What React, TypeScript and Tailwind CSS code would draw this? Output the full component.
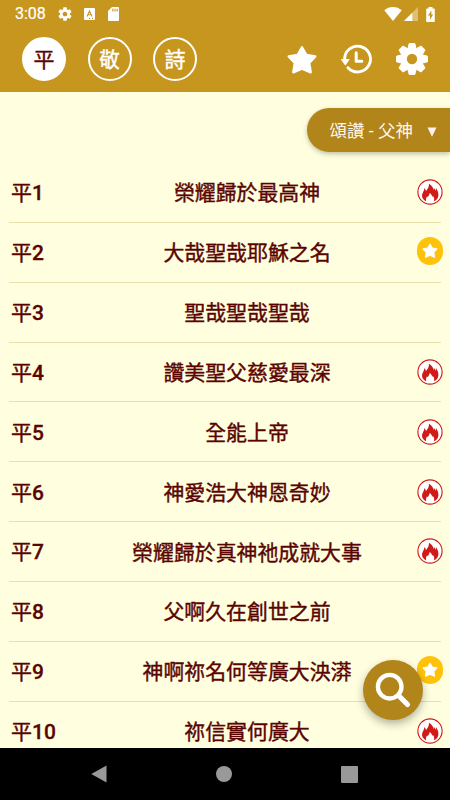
import type { ReactNode } from 'react';

type Mark = 'fire' | 'star';

const tabs = ['平', '敬', '詩'];

const hymns: { no: number; title: string; mark?: Mark }[] = [
  { no: 1, title: '榮耀歸於最高神', mark: 'fire' },
  { no: 2, title: '大哉聖哉耶穌之名', mark: 'star' },
  { no: 3, title: '聖哉聖哉聖哉' },
  { no: 4, title: '讚美聖父慈愛最深', mark: 'fire' },
  { no: 5, title: '全能上帝', mark: 'fire' },
  { no: 6, title: '神愛浩大神恩奇妙', mark: 'fire' },
  { no: 7, title: '榮耀歸於真神祂成就大事', mark: 'fire' },
  { no: 8, title: '父啊久在創世之前' },
  { no: 9, title: '神啊祢名何等廣大泱漭', mark: 'star' },
  { no: 10, title: '祢信實何廣大', mark: 'fire' },
];

const GEAR =
  'M19.43 12.98c.04-.32.07-.64.07-.98s-.03-.66-.07-.98l2.11-1.65c.19-.15.24-.42.12-.64l-2-3.46c-.12-.22-.39-.3-.61-.22l-2.49 1c-.52-.4-1.08-.73-1.69-.98l-.38-2.65A.488.488 0 0 0 14 2h-4c-.25 0-.46.18-.49.42l-.38 2.65c-.61.25-1.17.59-1.69.98l-2.49-1c-.23-.09-.49 0-.61.22l-2 3.46c-.13.22-.07.49.12.64l2.11 1.65c-.04.32-.07.65-.07.98s.03.66.07.98l-2.11 1.65c-.19.15-.24.42-.12.64l2 3.46c.12.22.39.3.61.22l2.49-1c.52.4 1.08.73 1.69.98l.38 2.65c.03.24.24.42.49.42h4c.25 0 .46-.18.49-.42l.38-2.65c.61-.25 1.17-.59 1.69-.98l2.49 1c.23.09.49 0 .61-.22l2-3.46c.12-.22.07-.49-.12-.64l-2.11-1.65zM12 15.5c-1.93 0-3.5-1.57-3.5-3.5s1.57-3.5 3.5-3.5 3.5 1.57 3.5 3.5-1.57 3.5-3.5 3.5z';

function Star({ className }: { className: string }) {
  return (
    <svg viewBox="0 0 30 29" className={className} fill="currentColor" stroke="currentColor" strokeWidth="2.4" strokeLinejoin="round">
      <path d="M15 2.3l4.3 7.6 9 1.6-6.1 6.5 1.5 9.3-8.7-3.7-8.7 3.7 1.5-9.3-6.1-6.5 9-1.6z" />
    </svg>
  );
}

function StatusBar() {
  return (
    <div className="flex h-7 items-center justify-between pl-[15px] pr-[15px]">
      <div className="flex items-center">
        <span className="w-[44px] text-[16px] leading-none [-webkit-text-stroke:0.2px]">3:08</span>
        <svg viewBox="0 0 24 24" className="-ml-[2px] h-4 w-4" fill="currentColor"><path d={GEAR} /></svg>
        <svg viewBox="0 0 11 12" className="ml-[11px] h-3 w-[11px]">
          <rect width="11" height="12" rx="1" fill="currentColor" />
          <path d="M3 8.5L5.5 3 8 8.5M4 6.8h3M5 10.4h1M8 10.4h1" stroke="#c7961f" strokeWidth="1.1" fill="none" />
        </svg>
        <svg viewBox="0 0 11 14" className="ml-[13px] h-[14px] w-[11px]">
          <path d="M4 0h6a1 1 0 0 1 1 1v12a1 1 0 0 1-1 1H1a1 1 0 0 1-1-1V4z" fill="currentColor" />
          <path d="M4.8 1.8v2.6M7 1.8v2.6M9.2 1.8v2.6" stroke="#c7961f" strokeWidth="1.1" />
        </svg>
      </div>
      <div className="flex items-center">
        <svg viewBox="0 0 18 14" className="h-[14px] w-[18px]" fill="currentColor">
          <path d="M9 14L.3 3.3C2.7 1.2 5.7 0 9 0s6.3 1.2 8.7 3.3z" />
        </svg>
        <svg viewBox="0 0 14 14" className="ml-[2px] h-[14px] w-[14px]" fill="currentColor">
          <path d="M14 0v14H0z" opacity=".4" />
          <path d="M8.3 5.7V14H0z" />
        </svg>
        <svg viewBox="0 0 9 15" className="ml-2 h-[15px] w-[9px]">
          <path d="M2.5 0h4v1.5H8a.8.8 0 0 1 .8.8v11.9a.8.8 0 0 1-.8.8H1a.8.8 0 0 1-.8-.8V2.3A.8.8 0 0 1 1 1.5h1.5z" fill="currentColor" />
          <path d="M5.4 3.500L2 8.600h2v4.200l3.200-5.400H5.400z" fill="#c7961f" />
        </svg>
      </div>
    </div>
  );
}

function HistoryIcon() {
  return (
    <svg viewBox="0 0 32 30" className="h-[30px] w-8" fill="none" stroke="currentColor" strokeWidth="2.9" strokeLinecap="round">
      <path d="M3.700 16A12.900 12.900 0 1 1 7 23.700" />
      <path d="M15.200 8.700v8.600h5.600" strokeWidth="3" strokeLinejoin="round" />
      <path d="M.6 15.500h7.400L4.300 20.600z" fill="currentColor" strokeWidth="1.2" strokeLinejoin="round" />
    </svg>
  );
}

function BigGear() {
  return (
    <svg viewBox="-16 -16 32 32" className="h-8 w-8">
      <g fill="currentColor" stroke="currentColor" strokeWidth="1" strokeLinejoin="round">
        {[0, 45, 90, 135, 180, 225, 270, 315].map((a) => (
          <path key={a} d="M-4.200-10L-2.800-15.500H2.800L4.200-10z" transform={`rotate(${a})`} />
        ))}
        <circle r="11.200" />
      </g>
      <circle r="5.200" fill="#c7961f" />
    </svg>
  );
}

function FireMark() {
  return (
    <svg viewBox="0 0 26 26" className="h-[26px] w-[26px]">
      <circle cx="13" cy="13" r="12.1" fill="#fff" stroke="#cf1b18" strokeWidth="1.1" />
      <path
        d="M9.2 22.500C6 21 4.600 18.400 5.100 15.600c.4-1.900 2.100-3.500 2.200-6.300 1.100.8 1.600 1.700 1.600 2.900 1.700-2.200 3.300-4.200 3.100-7.500 2.500 1.400 4.300 3.500 4.500 6.400.4-.6.500-1.200.3-2 1 .7 1.400 1.700 1.500 2.900.6-.8.800-1.700.6-2.900 1.800 2.200 2.500 4.500 2.500 6.900 0 2.900-1.500 5.100-4.400 6.300.5-2.100.1-4-1.200-5.500-.1.500-.3.900-.7 1.200-.1-1.800-.9-3.200-2.500-4.100.1 1.900-1.100 2.900-1.900 4.300-.3-.2-.5-.5-.6-.9-1 1.600-1.400 3.400-.9 5.200z"
        fill="#cf1b18"
      />
    </svg>
  );
}

function StarMark() {
  return (
    <div className="mb-[2px] flex h-7 w-[26px] items-center justify-center rounded-[13px] bg-[#ffc20a] pb-[2px] text-white">
      <Star className="h-[15px] w-4" />
    </div>
  );
}

function RoundTab({ active, children }: { active: boolean; children: ReactNode }) {
  return (
    <button
      className={
        'flex h-11 w-11 items-center justify-center rounded-full border-2 border-white pt-[2px] text-[21px] leading-none [-webkit-text-stroke:0.4px] ' +
        (active ? 'bg-white text-[#5a0402]' : 'text-white')
      }
    >
      {children}
    </button>
  );
}

export default function App() {
  return (
    <div className="relative flex h-[800px] w-[450px] flex-col overflow-hidden bg-[#ffffdf] font-[Roboto,'Noto_Sans_CJK_TC',sans-serif]">
      <header className="h-[92px] shrink-0 bg-[#c7961f] text-white">
        <StatusBar />
        <div className="flex items-center justify-between pl-[22px] pr-[22px] pt-[9px]">
          <div className="flex gap-[21.5px]">
            {tabs.map((t, i) => (
              <RoundTab key={t} active={i === 0}>{t}</RoundTab>
            ))}
          </div>
          <div className="flex items-center">
            <Star className="mr-6 h-[29px] w-[30px]" />
            <HistoryIcon />
            <span className="ml-[23px]"><BigGear /></span>
          </div>
        </div>
      </header>

      <main className="flex min-h-0 flex-1 flex-col overflow-hidden">
        <div className="flex h-[71px] shrink-0 justify-end pt-4">
          <button className="flex h-11 w-[143px] items-center rounded-l-full bg-[#b1851a] pl-[22.5px] text-[17.5px] leading-none text-[#fff6ea] shadow-[0_2px_5px_rgba(0,0,0,0.25)]">
            <span className="w-[97px] pt-[3px] text-left whitespace-nowrap">頌讚 - 父神</span>
            <svg viewBox="0 0 10 10" className="mt-[3px] h-[10px] w-[10px]" fill="#fdf0ee"><path d="M.5.5h9L5 9.8z" /></svg>
          </button>
        </div>
        <ul className="px-[9px] text-[#5a0402]">
          {hymns.map((h) => (
            <li key={h.no} className="flex h-[59.85px] items-center border-b border-[#eadfae]">
              <span className="w-[62px] shrink-0 pl-[2px] pt-[3px] text-[21px] leading-none font-medium whitespace-nowrap [-webkit-text-stroke:0.3px]">
                <span className="font-normal [-webkit-text-stroke:0.4px]">平</span>
                {h.no}
              </span>
              <span className="flex-1 pt-[3px] pl-4 text-center text-[20.9px] leading-none whitespace-nowrap [-webkit-text-stroke:0.4px]">
                {h.title}
              </span>
              <span className="-mr-[2px] flex w-[36px] shrink-0 justify-end">
                {h.mark === 'fire' && <FireMark />}
                {h.mark === 'star' && <StarMark />}
              </span>
            </li>
          ))}
        </ul>
      </main>

      <button className="absolute bottom-[80px] right-[27.5px] h-[60px] w-[60px] rounded-full bg-[#b1851a] shadow-[0_4px_8px_rgba(0,0,0,0.3)]">
        <svg viewBox="0 0 60 60" className="h-[60px] w-[60px]" fill="none" stroke="#fff" strokeLinecap="round">
          <circle cx="26.7" cy="26.7" r="11.8" strokeWidth="4.3" />
          <path d="M35.5 35.5l9 9" strokeWidth="5.2" />
        </svg>
      </button>

      <nav className="flex h-[52px] shrink-0 items-center justify-between bg-black pl-[91px] pr-[92px] text-[#999]">
        <svg viewBox="0 0 16 18" className="h-[18px] w-4" fill="currentColor"><path d="M15.5.5v17L.3 9z" /></svg>
        <span className="h-4 w-4 rounded-full bg-[#999]" />
        <span className="h-[17px] w-[17px] rounded-[1px] bg-[#999]" />
      </nav>
    </div>
  );
}
